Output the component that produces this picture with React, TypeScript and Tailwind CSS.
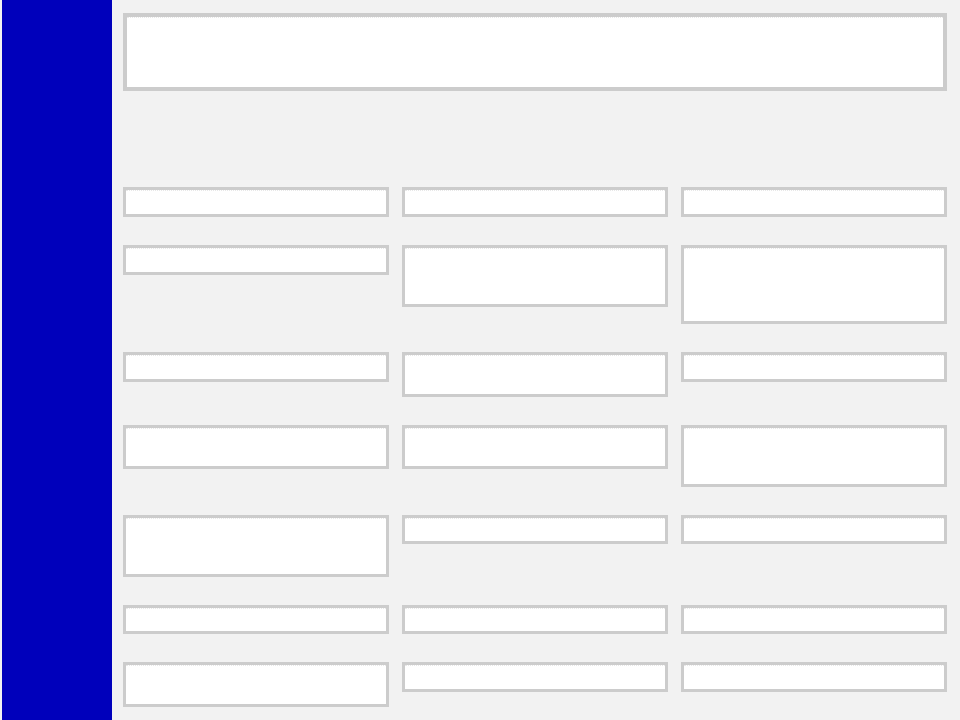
const rows: string[][] = [
  ['h-[30px]', 'h-[30px]', 'h-[30px]'],
  ['h-[30px]', 'h-[62px]', 'h-[79px]'],
  ['h-[30px]', 'h-[45px]', 'h-[30px]'],
  ['h-[44px]', 'h-[44px]', 'h-[62px]'],
  ['h-[62px]', 'h-[29px]', 'h-[29px]'],
  ['h-[29px]', 'h-[29px]', 'h-[29px]'],
  ['h-[45px]', 'h-[30px]', 'h-[30px]'],
]

function Field({ size }: { size: string }) {
  return (
    <div className={`${size} border-[3px] border-[#cccccc] bg-white`}>
      <div className="border-t border-dotted border-[#e8e8e8]" />
    </div>
  )
}

export default function App() {
  return (
    <div className="flex h-[720px] overflow-hidden bg-[#f2f2f2] font-['Liberation_Sans',sans-serif]">
      {/* Sidebar */}
      <aside className="ml-[2px] w-[110px] shrink-0 bg-[#0000bb]" />

      {/* Main */}
      <main className="flex-1 pl-[11px] pr-[13px] pt-[13px]">
        <div className="h-[78px] border-4 border-[#cccccc] bg-white">
          <div className="border-t border-dotted border-[#e8e8e8]" />
        </div>

        <div className="mt-[96px] grid grid-cols-3 items-start gap-x-[13px] gap-y-[28px]">
          {rows.map((row, i) =>
            row.map((size, j) => <Field key={`${i}-${j}`} size={size} />)
          )}
        </div>
      </main>
    </div>
  )
}
